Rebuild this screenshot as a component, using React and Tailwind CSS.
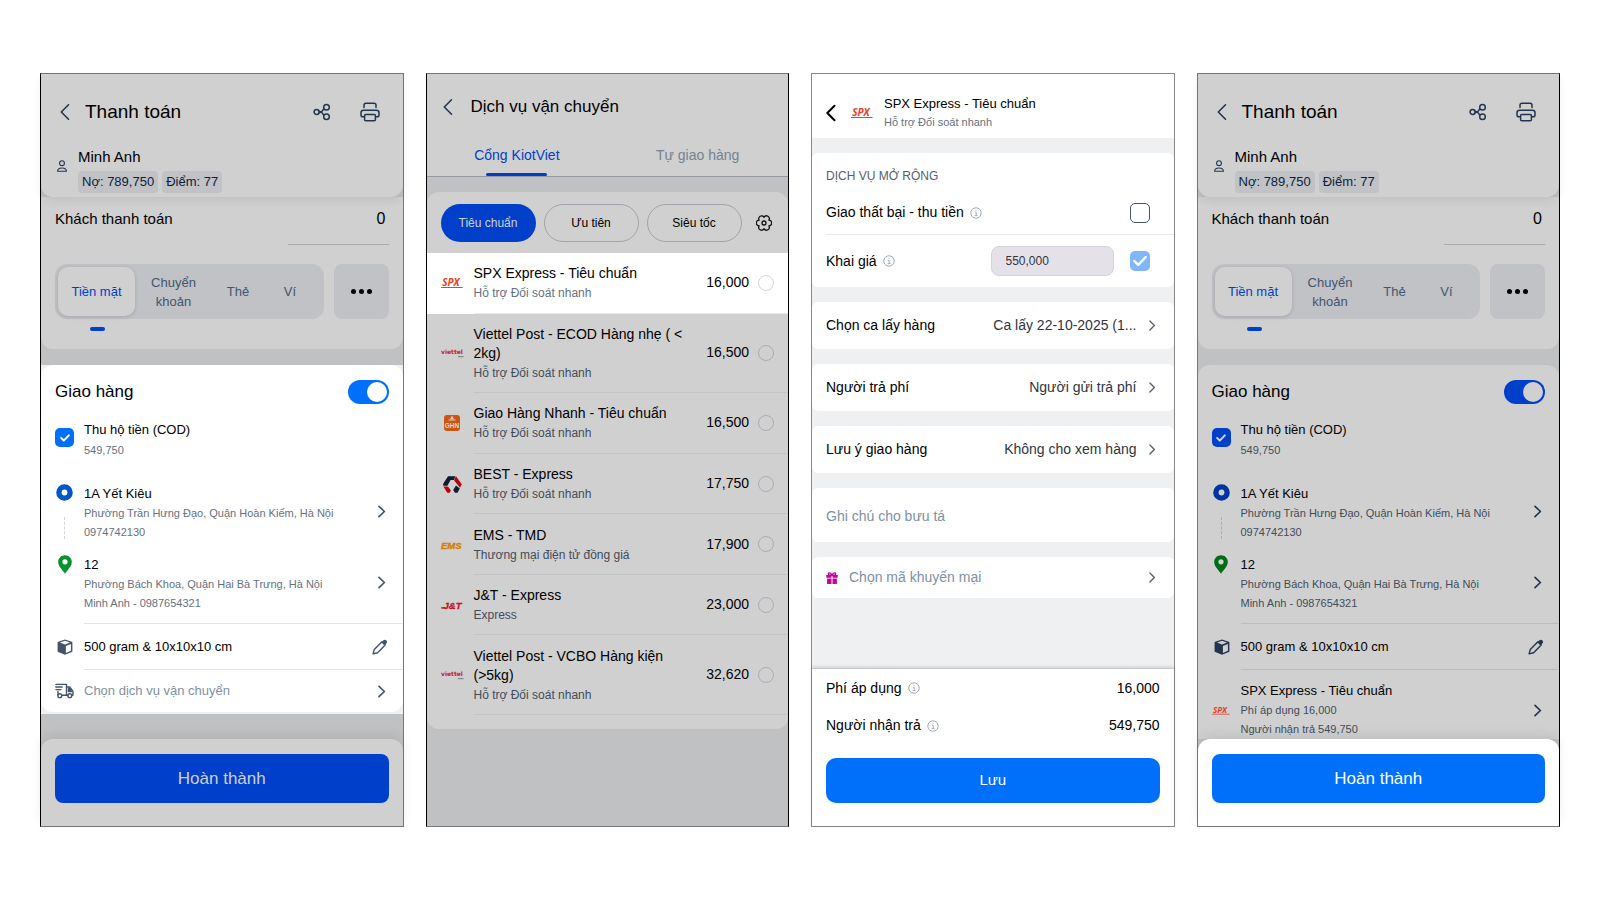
import React from "react";

const LIGHT =
  "[--card:#ffffff] [--page:#eff0f2] [--brand:#0070fa] [--onbrand:#ffffff] [--chip:#eceff3] [--ink:#000000] [--sub:#66717f] [--mute:#8190a2] [--icon:#44546a] [--line:#e2e4e7] [--hair:#e8eaec] [--dot:#d0d6e0] [--ring:#0057c8] [--pin:#08922f]";
const DIM =
  "[--card:#d0d0d0] [--page:#c0c1c3] [--brand:#003fc9] [--onbrand:#d0d0d0] [--chip:#c0c2c5] [--ink:#000000] [--sub:#424d5a] [--mute:#76828f] [--icon:#24364e] [--line:#bbbdc0] [--hair:#c3c4c6] [--dot:#a7aeb9] [--ring:#0034a0] [--pin:#006c14]";

function ChevronLeft({ strong }) {
  return (
    <svg width="10" height="18" viewBox="0 0 10 18" fill="none" stroke={strong ? "#000" : "var(--icon)"} strokeWidth={strong ? 2 : 1.6} strokeLinecap="round" strokeLinejoin="round" aria-hidden="true">
      <path d="M8.500 1.800 1.300 9l7.200 7.200" />
    </svg>
  );
}

function ChevronRight({ small }) {
  return (
    <svg width={small ? 8 : 9} height={small ? 11 : 13} viewBox="0 0 9 13" fill="none" stroke={small ? "#5c6370" : "var(--icon)"} strokeWidth="1.700" strokeLinecap="round" strokeLinejoin="round" className="shrink-0" aria-hidden="true">
      <path d="m2 1.300 5.400 5.200L2 11.700" />
    </svg>
  );
}

function ShareIcon() {
  return (
    <svg width="18" height="18" viewBox="0 0 18 18" fill="none" stroke="var(--icon)" strokeWidth="1.500" aria-hidden="true">
      <circle cx="3.600" cy="9" r="2.500" />
      <circle cx="13.500" cy="4.300" r="2.800" />
      <circle cx="13.500" cy="13.700" r="2.800" />
      <path d="M6 8.200c2 1.500 3.400.4 4.800-2.600M6 9.800c2-1.500 3.400-.4 4.800 2.600" />
    </svg>
  );
}

function PrintIcon() {
  return (
    <svg width="20" height="20" viewBox="0 0 20 20" fill="none" stroke="var(--icon)" strokeWidth="1.500" strokeLinejoin="round" strokeLinecap="round" aria-hidden="true">
      <path d="M4 5.600V3.200C4 2 4.800 1.200 6 1.200h8c1.200 0 2 .8 2 2v2.400" />
      <path d="M4 14.800H2.800C1.700 14.800 1 14.100 1 13v-2.200c0-1.500 1-2.500 2.500-2.500h13c1.500 0 2.500 1 2.500 2.500V13c0 1.100-.7 1.800-1.800 1.800H16" />
      <rect x="4.600" y="12.400" width="10.800" height="6.400" rx="1" />
    </svg>
  );
}

function UserIcon() {
  return (
    <svg width="10" height="12" viewBox="0 0 10 12" fill="none" stroke="var(--icon)" strokeWidth="1.100" strokeLinejoin="round" aria-hidden="true">
      <circle cx="5" cy="3.200" r="2.400" />
      <path d="M.6 11.300c0-2.300 1.400-3.300 4.400-3.300s4.400 1 4.400 3.300z" />
    </svg>
  );
}

function PinIcon() {
  return (
    <svg width="14" height="19" viewBox="0 0 14 19" aria-hidden="true">
      <path fill="var(--pin)" d="M7 .3C3.200.3.2 3.200.2 7c0 4.700 4.300 7.700 6.800 11.800C9.500 14.700 13.800 11.700 13.800 7c0-3.800-3-6.700-6.800-6.700Z" />
      <circle cx="7" cy="6.800" r="2.600" fill="var(--card)" />
    </svg>
  );
}

function RingIcon() {
  return (
    <svg width="17" height="17" viewBox="0 0 17 17" aria-hidden="true">
      <circle cx="8.500" cy="8.500" r="5.600" fill="var(--card)" stroke="var(--ring)" strokeWidth="5.400" />
    </svg>
  );
}

function BoxIcon() {
  return (
    <svg width="16" height="16" viewBox="0 0 16 16" aria-hidden="true">
      <path fill="var(--icon)" d="M8 .4 14.800 2.700a.8.8 0 0 1 .6.8v8.700a.9.9 0 0 1-.6.8L8 15.700 1.200 13a.9.9 0 0 1-.6-.8V3.500c0-.4.2-.7.6-.8Z" />
      <path fill="var(--card)" d="M8 1.700 13 3.500 8 5.600 3 3.500ZM8.900 7.100l5-2.100v6.800l-5 2.100Z" />
    </svg>
  );
}

function PencilIcon() {
  return (
    <svg width="16" height="16" viewBox="0 0 16 16" aria-hidden="true">
      <path fill="none" stroke="var(--icon)" strokeWidth="1.400" strokeLinejoin="round" d="m2.300 10.400 7.600-7.600 3.300 3.300-7.600 7.600-4.500 1.200Z" />
      <path fill="var(--icon)" d="m9.600 3.200 1.800-1.900c1-.9 2.100-.8 3 .1s.9 2.100 0 3.100l-1.900 1.900Z" />
    </svg>
  );
}

function TruckIcon() {
  return (
    <svg width="19" height="16" viewBox="0 0 19 16" fill="none" stroke="var(--icon)" strokeWidth="1.400" strokeLinejoin="round" strokeLinecap="round" aria-hidden="true">
      <path d="M1 1.400h5M.8 4h6.400M1 6.600h5M6 1.400h5.500v10.800H7M3 8.500v3.500M11.500 4h3.200l3.200 4.200v4H17M11.500 12.200H13" />
      <path fill="var(--icon)" d="M13.500 5.500h1l2 3h-3z" />
      <circle cx="4.800" cy="12.700" r="1.900" />
      <circle cx="14.800" cy="12.700" r="1.900" />
    </svg>
  );
}

function GearIcon() {
  return (
    <svg width="16" height="16" viewBox="0 0 16 16" fill="none" stroke="#111" strokeWidth="1.300" strokeLinejoin="round" aria-hidden="true">
      <path d="M8 2.300A2.800 2.800 0 0 1 12.900 5.200 2.800 2.800 0 0 1 12.900 10.800 2.800 2.800 0 0 1 8 13.700 2.800 2.800 0 0 1 3.100 10.800 2.800 2.800 0 0 1 3.100 5.200 2.800 2.800 0 0 1 8 2.300Z" />
      <circle cx="8" cy="8" r="2" />
    </svg>
  );
}

function InfoIcon() {
  return (
    <svg width="12" height="12" viewBox="0 0 12 12" fill="none" stroke="#a3abb6" strokeWidth="1" className="shrink-0" aria-hidden="true">
      <circle cx="6" cy="6" r="5.200" />
      <path d="M4.900 5.300H6.200v3.200M4.700 8.600h2.800M5.500 3.300h1" />
    </svg>
  );
}

function GiftIcon() {
  return (
    <svg width="12" height="12" viewBox="0 0 12 12" aria-hidden="true">
      <path fill="none" stroke="#c4059b" strokeWidth="1.400" d="M5.900 3.200C5.300 1.300 4.200.7 3.200.9c-1.300.3-1.100 2.300.6 2.300Zm.2 0C6.700 1.300 7.800.7 8.800.9c1.300.3 1.100 2.300-.6 2.300Z" />
      <path fill="#c4059b" d="M.3 3.100h5.200v2.700H.3ZM6.500 3.100h5.200v2.700H6.500ZM1.100 6.600h4.400V12H1.100ZM6.500 6.600h4.400V12H6.500Z" />
    </svg>
  );
}

function BestLogo() {
  return (
    <svg width="19" height="17" viewBox="0 0 19 17" aria-label="BEST">
      <path fill="#0e1a2e" d="M5 .3h7.500L10.800 4H7.600L4.400 9.800H.2v-2Z" />
      <path fill="#b3040f" d="M13 .3 18.800 8.300 17 11.800 11 4.200Z" />
      <path fill="#b3040f" d="M.4 10.500h4.600L7.800 14.200 6.800 16.800H4.200Z" />
      <path fill="#0e1a2e" d="m13 9.400 3.800 3-2.300 4.400H12l-1.800-2.700Z" />
    </svg>
  );
}

function GhnLogo() {
  return (
    <svg width="16" height="16" viewBox="0 0 16 16" aria-label="GHN">
      <rect width="16" height="16" rx="3" fill="#cd5512" />
      <path d="m6 4.200 2-3.600 2 3.600Z" fill="#d8cfc8" />
      <path d="M4.500 5h7" stroke="#d8cfc8" strokeWidth="1" />
      <text x="8" y="12.800" textAnchor="middle" fontFamily="Liberation Sans, sans-serif" fontWeight="700" fontSize="6.500" fill="#e3dcd6">GHN</text>
    </svg>
  );
}

function SpxLogo({ small }) {
  return (
    <svg width={small ? 18 : 22} height={small ? 13 : 16} viewBox="0 0 22 16" className="overflow-visible" aria-label="SPX">
      <text x="1.200" y="11.400" fontFamily="Noto Sans, sans-serif" fontStyle="italic" fontWeight="700" fontSize="10" fill="#e8401f">SPX</text>
      <path d="M0 12.500h21.600" stroke="#e8401f" strokeWidth="1" />
    </svg>
  );
}

function ViettelLogo() {
  return (
    <svg width="23" height="10" viewBox="0 0 23 10" aria-label="viettel post">
      <text x="0" y="6.300" fontFamily="DejaVu Sans, sans-serif" fontWeight="700" fontSize="6" fill="#c01a35">viettel</text>
      <path d="M17 8.700h5.500" stroke="#777" strokeWidth="1" />
    </svg>
  );
}

function EmsLogo() {
  return (
    <svg width="22" height="12" viewBox="0 0 22 12" className="overflow-visible" aria-label="EMS">
      <text x="0" y="9.500" fontFamily="Liberation Sans, sans-serif" fontStyle="italic" fontWeight="700" fontSize="9.500" fill="#d07f0b" stroke="#d07f0b" strokeWidth=".4">EMS</text>
    </svg>
  );
}

function JntLogo() {
  return (
    <svg width="22" height="12" viewBox="0 0 22 12" className="overflow-visible" aria-label="J&T">
      <text x="2.500" y="9.500" fontFamily="Liberation Sans, sans-serif" fontStyle="italic" fontWeight="700" fontSize="9.500" fill="#c8101c" stroke="#c8101c" strokeWidth=".3">J&amp;T</text>
      <path d="M.3 8.900h4" stroke="#c8101c" strokeWidth="1.500" />
    </svg>
  );
}

function Tick({ id, label, className, thick }) {
  return (
    <span className="grid shrink-0 place-items-center">
      <input id={id} aria-label={label} type="checkbox" defaultChecked className={`col-start-1 row-start-1 appearance-none ${className}`} />
      <svg width={thick ? 16 : 10} height={thick ? 12 : 8} viewBox="0 0 10 8" fill="none" stroke="var(--onbrand)" strokeWidth={thick ? 1.5 : 2} strokeLinecap="round" strokeLinejoin="round" className="pointer-events-none col-start-1 row-start-1" aria-hidden="true">
        <path d="m1.200 4 2.600 2.600 5-5.200" />
      </svg>
    </span>
  );
}

function Phone({ edge, label, children }) {
  return (
    <section aria-label={label} className={`flex min-h-[754px] min-w-0 flex-col border bg-[var(--page)] ${edge}`}>
      {children}
    </section>
  );
}

function CheckoutTop({ id }) {
  return (
    <div className={`${DIM} flex flex-col bg-[var(--page)]`}>
      <header className="z-10 rounded-b-xl bg-[var(--card)] px-4 pt-[26px] pb-1 shadow-[0_4px_10px_rgba(0,0,0,0.07)]">
        <div className="flex h-6 items-center pr-[7px] pl-[3px]">
          <button type="button" aria-label="Quay lại"><ChevronLeft /></button>
          <h2 className="ml-[15px] flex-1 text-[19px] leading-6 text-[var(--ink)]">Thanh toán</h2>
          <button type="button" aria-label="Chia sẻ"><ShareIcon /></button>
          <button type="button" aria-label="In" className="ml-[29px]"><PrintIcon /></button>
        </div>
        <div className="mt-[23px] flex items-center gap-[11px]">
          <span className="pb-2"><UserIcon /></span>
          <div>
            <p className="text-[15px] leading-5 text-[var(--ink)]">Minh Anh</p>
            <p className="mt-1 flex gap-1 text-[13px] leading-[22px] text-[#0c1e3c]">
              <span className="rounded bg-[var(--chip)] px-1">Nợ: 789,750</span>
              <span className="rounded bg-[var(--chip)] px-1">Điểm: 77</span>
            </p>
          </div>
        </div>
      </header>
      <div className="rounded-b-xl bg-[var(--card)] px-[14px] pt-[10px] pb-[18px]">
        <div className="flex justify-between">
          <label htmlFor={id} className="text-[15px] leading-6 text-[var(--ink)]">Khách thanh toán</label>
          <input id={id} defaultValue="0" className="h-[38px] w-[101px] border-b border-[#a9abae] bg-transparent pr-[3px] pb-[13px] text-right text-base text-[var(--ink)] outline-none" />
        </div>
        <div className="mt-[19px] flex h-[55px] gap-[10px]">
          <div className="flex flex-1 items-center rounded-xl bg-[var(--chip)] p-[3px] text-[13px] leading-[19px] text-[#44556d]">
            <button type="button" className="h-full w-[77px] rounded-[10px] bg-[var(--card)] text-[var(--brand)] shadow-[0_1px_4px_rgba(0,0,0,0.15)]">Tiền mặt</button>
            <button type="button" className="w-[77px] px-3">Chuyển khoản</button>
            <button type="button" className="w-[52px]">Thẻ</button>
            <button type="button" className="w-[52px]">Ví</button>
          </div>
          <button type="button" aria-label="Thêm phương thức" className="flex w-[55px] items-center justify-center gap-[3px] rounded-lg bg-[var(--chip)]">
            <span className="size-[5px] rounded-full bg-black" />
            <span className="size-[5px] rounded-full bg-black" />
            <span className="size-[5px] rounded-full bg-black" />
          </button>
        </div>
        <div className="mt-2 ml-[35px] h-1 w-[15px] rounded-sm bg-[var(--brand)]" />
      </div>
      <div className="h-4" />
    </div>
  );
}

function Address({ icon, title, lines, dotted }) {
  return (
    <button type="button" className="flex w-full items-center text-left">
      <span className="flex w-[19px] flex-col items-center self-stretch">
        {icon}
        {dotted && <span className="mt-4 h-[22px] border-l border-dashed border-[var(--dot)]" />}
      </span>
      <span className="ml-[10px] flex-1">
        <span className="block text-[13px] leading-5 text-[var(--ink)]">{title}</span>
        {lines.map((l) => (
          <span key={l} className="block text-[11px] leading-[19px] whitespace-nowrap text-[var(--sub)]">{l}</span>
        ))}
      </span>
      <span className="mr-[3px] pb-1"><ChevronRight /></span>
    </button>
  );
}

function Delivery({ id, flush, children }) {
  return (
    <div className={`bg-[var(--page)] ${flush ? "" : "pb-[2px]"}`}>
      <div className={`bg-[var(--card)] pt-[15px] pl-[14px] ${flush ? "rounded-t-xl" : "rounded-xl"}`}>
        <div className="flex h-6 items-center justify-between pr-[14px]">
          <label htmlFor={`${id}-on`} className="text-[17px] text-[var(--ink)]">Giao hàng</label>
          <span className="grid items-center">
            <input id={`${id}-on`} type="checkbox" role="switch" defaultChecked className="col-start-1 row-start-1 h-6 w-[41px] appearance-none rounded-full bg-[var(--brand)]" />
            <span className="pointer-events-none col-start-1 row-start-1 mr-[2px] size-5 justify-self-end rounded-full bg-[var(--card)]" />
          </span>
        </div>
        <div className="mt-4 flex">
          <span className="pt-2"><Tick id={`${id}-cod`} className="size-[19px] rounded-[5px] bg-[var(--brand)]" /></span>
          <label htmlFor={`${id}-cod`} className="ml-[10px]">
            <span className="block text-[13px] leading-5 text-[var(--ink)]">Thu hộ tiền (COD)</span>
            <span className="block text-[11px] leading-5 text-[var(--sub)]">549,750</span>
          </label>
        </div>
        <div className="mt-6 flex flex-col gap-[13px] pr-[14px]">
          <Address icon={<RingIcon />} title="1A Yết Kiêu" dotted lines={["Phường Trần Hưng Đạo, Quận Hoàn Kiếm, Hà Nội", "0974742130"]} />
          <Address icon={<PinIcon />} title="12" lines={["Phường Bách Khoa, Quận Hai Bà Trưng, Hà Nội", "Minh Anh - 0987654321"]} />
        </div>
        <div className="mt-[10px] flex">
          <span className="flex w-[29px] items-center pl-[2px]"><BoxIcon /></span>
          <button type="button" className="flex h-[47px] flex-1 items-center justify-between border-y border-[var(--line)] pr-[15px] text-[13px] text-[var(--ink)]">
            500 gram &amp; 10x10x10 cm
            <PencilIcon />
          </button>
        </div>
        {children}
      </div>
    </div>
  );
}

function BottomBar() {
  return (
    <div className="z-10 rounded-t-xl bg-[var(--card)] px-[14px] pt-[15px] pb-[23px] shadow-[0_-4px_12px_rgba(0,0,0,0.08)]">
      <button type="button" className="h-[49px] w-full rounded-lg bg-[var(--brand)] text-[17px] text-[var(--onbrand)]">Hoàn thành</button>
    </div>
  );
}

const SERVICES = [
  { name: "SPX Express - Tiêu chuẩn", note: "Hỗ trợ Đối soát nhanh", price: "16,000", logo: <SpxLogo />, lit: true },
  { name: "Viettel Post - ECOD Hàng nhẹ ( < 2kg)", note: "Hỗ trợ Đối soát nhanh", price: "16,500", logo: <ViettelLogo /> },
  { name: "Giao Hàng Nhanh - Tiêu chuẩn", note: "Hỗ trợ Đối soát nhanh", price: "16,500", logo: <GhnLogo /> },
  { name: "BEST - Express", note: "Hỗ trợ Đối soát nhanh", price: "17,750", logo: <BestLogo /> },
  { name: "EMS - TMD", note: "Thương mại điện tử đồng giá", price: "17,900", logo: <EmsLogo /> },
  { name: "J&T - Express", note: "Express", price: "23,000", logo: <JntLogo /> },
  { name: "Viettel Post - VCBO Hàng kiện (>5kg)", note: "Hỗ trợ Đối soát nhanh", price: "32,620", logo: <ViettelLogo /> },
];

function ServiceList() {
  return (
    <>
      <header className="bg-[var(--card)] pt-[21px]">
        <div className="flex h-6 items-center pl-4">
          <button type="button" aria-label="Quay lại"><ChevronLeft /></button>
          <h2 className="ml-[18px] text-[17px] text-[var(--ink)]">Dịch vụ vận chuyển</h2>
        </div>
        <div role="tablist" className="mt-[26px] grid grid-cols-2 border-b border-[#96999f] text-[14px] leading-5">
          <button type="button" role="tab" aria-selected="true" className="flex flex-col items-center gap-2 text-[var(--brand)]">
            Cổng KiotViet
            <span className="h-[3px] w-[61px] rounded-sm bg-[var(--brand)]" />
          </button>
          <button type="button" role="tab" aria-selected="false" className="pb-[11px] text-[var(--mute)]">Tự giao hàng</button>
        </div>
      </header>
      <div className="mt-[15px] rounded-xl bg-[var(--card)] pb-[14px]">
        <div className="flex items-center gap-2 px-[14px] pt-3 pb-[11px] text-[12px] text-[var(--ink)]">
          <button type="button" className="h-[38px] w-[95px] rounded-full bg-[var(--brand)] text-[var(--onbrand)]">Tiêu chuẩn</button>
          <button type="button" className="h-[38px] w-[95px] rounded-full border border-[#a2a4ab]">Ưu tiên</button>
          <button type="button" className="h-[38px] w-[95px] rounded-full border border-[#a2a4ab]">Siêu tốc</button>
          <button type="button" aria-label="Cài đặt" className="ml-[6px]"><GearIcon /></button>
        </div>
        <div className="flex min-h-[462px] flex-col">
          {SERVICES.map((s, i) => (
            <div key={s.name} className={`${s.lit ? LIGHT : DIM} flex flex-1 basis-auto items-stretch bg-[var(--card)] pl-[14px]`}>
              <span className="flex w-[23px] shrink-0 items-center justify-center">{s.logo}</span>
              <div className="ml-[10px] flex min-w-0 flex-1 items-center border-b border-[var(--hair)] pr-[14px]">
                <label htmlFor={`svc-${i}`} className="w-[216px] pt-[11px] pb-[9px]">
                  <span className="block text-[14px] leading-[19px] text-[var(--ink)]">{s.name}</span>
                  <span className="block text-[12px] leading-5 text-[var(--sub)]">{s.note}</span>
                </label>
                <span className="ml-auto text-[14px] text-[var(--ink)]">{s.price}</span>
                <input id={`svc-${i}`} type="radio" name="service" className="ml-[9px] size-4 shrink-0 appearance-none rounded-full border border-[var(--dot)]" />
              </div>
            </div>
          ))}
        </div>
      </div>
    </>
  );
}

function OptionRow({ label, value }) {
  return (
    <button type="button" className="flex h-[47px] w-full items-center rounded-md bg-white pr-[18px] pl-[14px] text-[14px] text-black">
      <span>{label}</span>
      <span className="ml-auto text-[#30353d]">{value}</span>
      <span className="ml-[11px]"><ChevronRight small /></span>
    </button>
  );
}

function ServiceDetail() {
  return (
    <>
      <header className="flex items-center bg-white pt-5 pb-[6px] pl-[14px]">
        <button type="button" aria-label="Quay lại"><ChevronLeft strong /></button>
        <span className="ml-[15px]"><SpxLogo /></span>
        <div className="ml-[11px]">
          <h2 className="text-[13px] leading-[19px] text-black">SPX Express - Tiêu chuẩn</h2>
          <p className="text-[11px] leading-[19px] text-[var(--sub)]">Hỗ trợ Đối soát nhanh</p>
        </div>
      </header>
      <div className="mt-[15px] flex flex-col gap-[15px]">
        <div className="rounded-md bg-white pt-[14px] pl-[14px] text-[14px] text-black">
          <h3 className="text-[12px] leading-[18px] text-[#55606f]">DỊCH VỤ MỞ RỘNG</h3>
          <div className="mt-[6px] flex h-11 items-center border-b border-[#e6e8ea] pr-6">
            <label htmlFor="fail-fee" className="mr-[6px]">Giao thất bại - thu tiền</label>
            <InfoIcon />
            <input id="fail-fee" type="checkbox" className="ml-auto size-5 appearance-none rounded-[5px] border border-[#44546a]" />
          </div>
          <div className="flex h-[52px] items-center pr-6">
            <label htmlFor="declared" className="mr-[6px]">Khai giá</label>
            <InfoIcon />
            <input id="declared" defaultValue="550,000" className="mr-4 ml-auto h-[30px] w-[123px] rounded-lg border border-[#d4d3dc] bg-[#e5e1e9] px-[14px] text-[12px] text-[#30353d] outline-none" />
            <Tick id="declare-on" label="Khai giá" thick className="size-5 rounded-[5px] bg-[#80b7fb]" />
          </div>
        </div>
        <OptionRow label="Chọn ca lấy hàng" value="Ca lấy 22-10-2025 (1..." />
        <OptionRow label="Người trả phí" value="Người gửi trả phí" />
        <OptionRow label="Lưu ý giao hàng" value="Không cho xem hàng" />
        <input aria-label="Ghi chú cho bưu tá" placeholder="Ghi chú cho bưu tá" className="h-[54px] w-full rounded-md bg-white px-[14px] pt-[2px] text-[14px] placeholder:text-[var(--mute)]" />
        <button type="button" className="flex h-[41px] items-center rounded-md bg-white pr-[18px] pl-[14px] text-[14px] text-[var(--mute)]">
          <GiftIcon />
          <span className="ml-[11px]">Chọn mã khuyến mại</span>
          <span className="ml-auto"><ChevronRight small /></span>
        </button>
      </div>
      <footer className="mt-auto border-t border-[#c9cacd] bg-white px-[14px] pb-[23px] text-[14px] text-black shadow-[0_-1px_3px_rgba(0,0,0,0.15)]">
        <dl>
          <div className="flex h-[38px] items-center">
            <dt className="mr-[6px]">Phí áp dụng</dt>
            <InfoIcon />
            <dd className="ml-auto">16,000</dd>
          </div>
          <div className="flex h-[37px] items-center">
            <dt className="mr-[6px]">Người nhận trả</dt>
            <InfoIcon />
            <dd className="ml-auto">549,750</dd>
          </div>
        </dl>
        <button type="button" className="mt-[14px] h-[45px] w-full rounded-[10px] bg-[var(--brand)] text-[15px] text-white">Lưu</button>
      </footer>
    </>
  );
}

export default function App() {
  return (
    <main className="flex min-h-screen items-center bg-white px-10 font-['Liberation_Sans',Arial,sans-serif]">
      <div className="grid w-full grid-cols-4 gap-[22px]">
        <Phone label="Thanh toán" edge={`${LIGHT} border-[#777] border-l-black`}>
          <CheckoutTop id="pay-a" />
          <Delivery id="ship-a">
            <button type="button" className="flex h-[42px] w-full items-center pr-[17px] text-[13px] text-[var(--mute)]">
              <TruckIcon />
              <span className="ml-[10px]">Chọn dịch vụ vận chuyển</span>
              <span className="ml-auto"><ChevronRight /></span>
            </button>
          </Delivery>
          <div className={`${DIM} flex flex-1 flex-col justify-end bg-[var(--page)]`}>
            <BottomBar />
          </div>
        </Phone>
        <Phone label="Dịch vụ vận chuyển" edge={`${DIM} border-black border-y-[#777]`}>
          <ServiceList />
        </Phone>
        <Phone label="Chi tiết dịch vụ" edge={`${LIGHT} border-[#888]`}>
          <ServiceDetail />
        </Phone>
        <Phone label="Hoàn tất" edge={`${DIM} border-[#777] border-r-black`}>
          <CheckoutTop id="pay-b" />
          <Delivery id="ship-b" flush>
            <button type="button" className="flex w-full items-center pt-[11px] pr-[17px] text-left">
              <SpxLogo small />
              <span className="ml-[11px]">
                <span className="block text-[13px] leading-5 text-[var(--ink)]">SPX Express - Tiêu chuẩn</span>
                <span className="block text-[11px] leading-[19px] text-[var(--sub)]">Phí áp dụng 16,000</span>
                <span className="block text-[11px] leading-[19px] text-[var(--sub)]">Người nhận trả 549,750</span>
              </span>
              <span className="ml-auto"><ChevronRight /></span>
            </button>
          </Delivery>
          <div className={`${LIGHT} mt-auto flex flex-col`}>
            <BottomBar />
          </div>
        </Phone>
      </div>
    </main>
  );
}
